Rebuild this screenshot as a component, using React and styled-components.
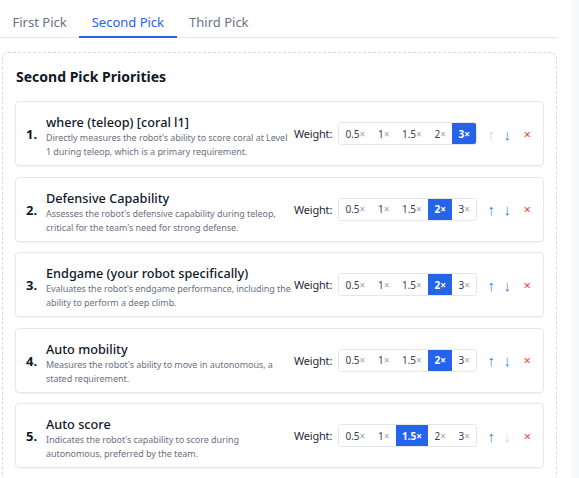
import React, { useState } from "react";
import styled, { createGlobalStyle } from "styled-components";

const GlobalStyle = createGlobalStyle`
  body {
    margin: 0;
    background: #ffffff;
    font-family: "Noto Sans", "Open Sans", sans-serif;
    color: #111827;
  }
`;

const priorities = [
  {
    title: "where (teleop) [coral l1]",
    text: "Directly measures the robot's ability to score coral at Level 1 during teleop, which is a primary requirement.",
    weight: "3",
  },
  {
    title: "Defensive Capability",
    text: "Assesses the robot's defensive capability during teleop, critical for the team's need for strong defense.",
    weight: "2",
  },
  {
    title: "Endgame (your robot specifically)",
    text: "Evaluates the robot's endgame performance, including the ability to perform a deep climb.",
    weight: "2",
  },
  {
    title: "Auto mobility",
    text: "Measures the robot's ability to move in autonomous, a stated requirement.",
    weight: "2",
  },
  {
    title: "Auto score",
    text: "Indicates the robot's capability to score during autonomous, preferred by the team.",
    weight: "1.5",
  },
];

const weights = ["0.5", "1", "1.5", "2", "3"];

const Page = styled.div`
  display: flex;
  gap: 13px;
  min-height: 100vh;
`;

const Main = styled.div`
  width: 558px;
  flex-shrink: 0;
`;

const Side = styled.div`
  flex: 1;
  background: #f8f9fb;
`;

const Tabs = styled.div`
  display: flex;
  height: 38px;
  border-bottom: 1px solid #e5e7eb;
  box-sizing: border-box;
`;

const Tab = styled.div`
  padding: 7px 12.5px 0;
  display: flex;
  align-items: center;
  font-size: 13px;
  color: ${(p) => (p.active ? "#2563eb" : "#6b7280")};
  border-bottom: 2px solid ${(p) => (p.active ? "#2563eb" : "transparent")};
  margin-bottom: -1px;
`;

const Panel = styled.div`
  margin: 14px 1px 0 2px;
  border: 1px dashed #d6d9de;
  border-radius: 6px;
  padding: 14px 12px 12px;
`;

const Heading = styled.h2`
  margin: 0 0 14px 1px;
  font-size: 14px;
  font-weight: 700;
  line-height: 20px;
  color: #111827;
`;

const List = styled.div`
  display: flex;
  flex-direction: column;
  gap: 10.5px;
`;

const Card = styled.div`
  display: flex;
  align-items: center;
  height: 65px;
  box-sizing: border-box;
  border: 1px solid #e5e7eb;
  border-radius: 4px;
  padding: 0 8px 0 10px;
  box-shadow: 0 1px 2px rgba(0, 0, 0, 0.05);
  & > * {
    flex-shrink: 0;
  }
`;

const Num = styled.div`
  font-size: 13px;
  font-weight: 700;
  width: 20px;
  padding-top: 1px;
`;

const Info = styled.div`
  width: 248px;
  padding-top: 5px;
`;

const Title = styled.div`
  font-size: 12.7px;
  font-weight: 500;
  line-height: 18px;
  color: #111827;
`;

const Desc = styled.div`
  font-size: 9px;
  letter-spacing: -0.06px;
  line-height: 14px;
  color: #6b7280;
`;

const WeightLabel = styled.div`
  font-size: 11px;
  letter-spacing: -0.2px;
  color: #1f2937;
  margin-right: 6px;
`;

const Segments = styled.div`
  display: flex;
  height: 21px;
  border: 1px solid #e5e7eb;
  border-radius: 3px;
  overflow: hidden;
`;

const Seg = styled.div`
  display: flex;
  align-items: center;
  padding: 0 6.3px;
  font-size: 10px;
  font-weight: ${(p) => (p.active ? 700 : 400)};
  color: ${(p) => (p.active ? "#ffffff" : "#374151")};
  background: ${(p) => (p.active ? "#2563eb" : "#ffffff")};
  span {
    color: ${(p) => (p.active ? "#ffffff" : "#9ca3af")};
  }
`;

const Actions = styled.div`
  display: flex;
  align-items: center;
  margin-left: 9px;
  gap: 6px;
`;

const Arrow = styled.div`
  width: 10px;
  text-align: center;
  font-size: 15px;
  color: ${(p) => (p.disabled ? "#d1d5db" : "#3b82f6")};
`;

const Remove = styled.div`
  width: 10px;
  text-align: center;
  margin-left: 4px;
  font-size: 13px;
  color: #ef4444;
`;

export default function App() {
  const [tab] = useState(1);
  const tabs = ["First Pick", "Second Pick", "Third Pick"];
  return (
    <>
      <GlobalStyle />
      <Page>
        <Main>
          <Tabs>
            {tabs.map((t, i) => (
              <Tab key={t} active={i === tab}>
                {t}
              </Tab>
            ))}
          </Tabs>
          <Panel>
            <Heading>Second Pick Priorities</Heading>
            <List>
              {priorities.map((p, i) => (
                <Card key={p.title}>
                  <Num>{i + 1}.</Num>
                  <Info>
                    <Title>{p.title}</Title>
                    <Desc>{p.text}</Desc>
                  </Info>
                  <WeightLabel>Weight:</WeightLabel>
                  <Segments>
                    {weights.map((w) => (
                      <Seg key={w} active={w === p.weight}>
                        {w}
                        <span>×</span>
                      </Seg>
                    ))}
                  </Segments>
                  <Actions>
                    <Arrow disabled={i === 0}>↑</Arrow>
                    <Arrow disabled={i === priorities.length - 1}>↓</Arrow>
                    <Remove>×</Remove>
                  </Actions>
                </Card>
              ))}
            </List>
          </Panel>
        </Main>
        <Side />
      </Page>
    </>
  );
}
